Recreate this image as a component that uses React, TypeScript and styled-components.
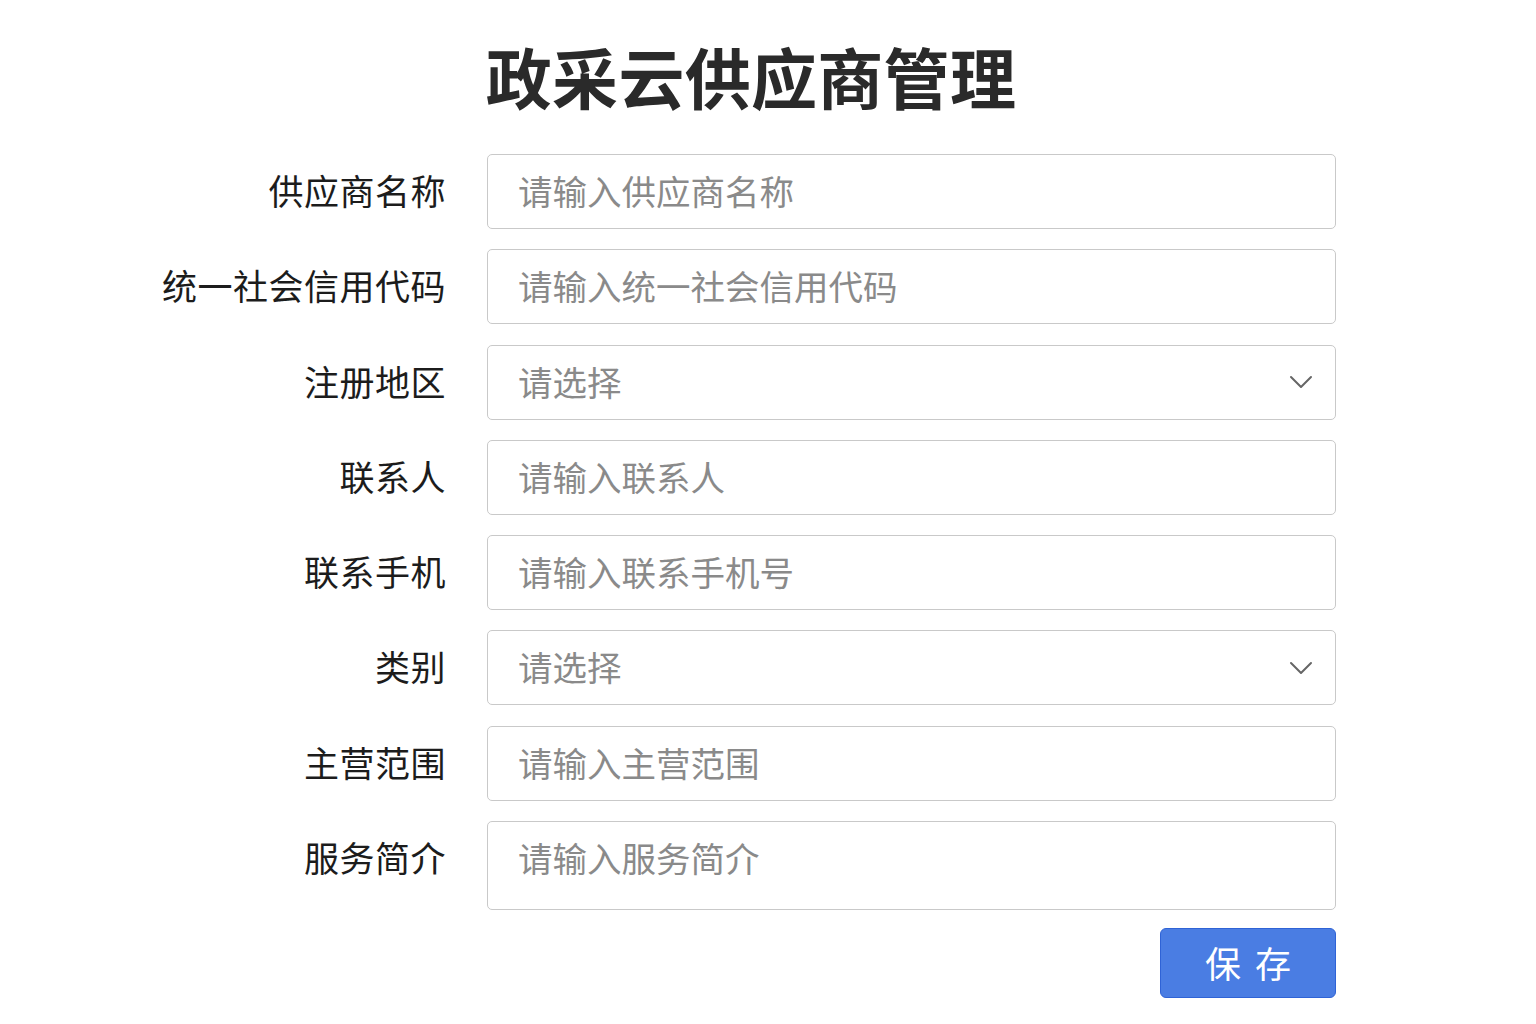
import React from "react";
import styled, { createGlobalStyle } from "styled-components";

const Global = createGlobalStyle`
  html, body { margin: 0; padding: 0; background: #ffffff; }
  body { font-family: "Noto Sans CJK SC", "Noto Sans", sans-serif; }
  * { box-sizing: border-box; }
`;

const Page = styled.div`
  width: 1536px;
  min-height: 1024px;
  background: #ffffff;
  padding-top: 42px;
`;

const Title = styled.h1`
  margin: 0 34px 0 0;
  text-align: center;
  font-size: 66px;
  line-height: 66px;
  font-weight: 700;
  color: #2a2a2a;
  letter-spacing: 0.3px;
`;

const Form = styled.form`
  margin-top: 46px;
  margin-left: 144px;
  display: grid;
  grid-template-columns: 300px 849px;
  column-gap: 43px;
  row-gap: 20.3px;
`;

const Label = styled.label<{ $top?: boolean }>`
  display: flex;
  justify-content: flex-end;
  align-items: ${(p) => (p.$top ? "flex-start" : "center")};
  height: ${(p) => (p.$top ? "75px" : "auto")};
  align-self: ${(p) => (p.$top ? "start" : "stretch")};
  font-size: 35px;
  letter-spacing: 0.5px;
  color: #1c1c1c;
  line-height: 72px;
  padding-bottom: 3px;
  margin-right: -2px;
`;

const fieldBase = `
  width: 849px;
  border: 1.5px solid #c9c9c9;
  border-radius: 5px;
  background: #ffffff;
  font-family: "Noto Sans CJK SC", "Noto Sans", sans-serif;
  font-size: 34.5px;
  color: #333;
  padding: 0 30px 3px 30px;
  outline: none;
`;

const TextInput = styled.input`
  ${fieldBase}
  height: 75px;
  &::placeholder { color: #8a8a8a; }
`;

const SelectBox = styled.div`
  ${fieldBase}
  height: 75px;
  display: flex;
  align-items: center;
  justify-content: space-between;
  color: #8a8a8a;
  padding-right: 22px;
`;

const ChevronWrap = styled.span`
  display: flex;
  margin-top: 3px;
`;

const TextArea = styled.textarea`
  ${fieldBase}
  height: 89px;
  padding-top: 8px;
  line-height: 54px;
  resize: none;
  display: block;
  &::placeholder { color: #8a8a8a; }
`;

const Actions = styled.div`
  grid-column: 2;
  display: flex;
  justify-content: flex-end;
  margin-top: -2px;
`;

const SaveButton = styled.button`
  width: 176px;
  height: 70px;
  border: 1.5px solid #2f63d6;
  border-radius: 6px;
  background: #4a7de3;
  color: #ffffff;
  font-family: "Noto Sans CJK SC", "Noto Sans", sans-serif;
  font-size: 36px;
  letter-spacing: 3px;
  text-indent: 3px;
  cursor: pointer;
  padding: 0 0 2px 0;
  white-space: pre;
`;

const Chevron = () => (
  <svg width="24" height="14" viewBox="0 0 24 14" fill="none">
    <path d="M2 2 L12 12 L22 2" stroke="#666" strokeWidth="2" strokeLinecap="round" strokeLinejoin="round" />
  </svg>
);

type Field = { label: string; kind: "input" | "select" | "textarea"; placeholder: string };

const fields: Field[] = [
  { label: "供应商名称", kind: "input", placeholder: "请输入供应商名称" },
  { label: "统一社会信用代码", kind: "input", placeholder: "请输入统一社会信用代码" },
  { label: "注册地区", kind: "select", placeholder: "请选择" },
  { label: "联系人", kind: "input", placeholder: "请输入联系人" },
  { label: "联系手机", kind: "input", placeholder: "请输入联系手机号" },
  { label: "类别", kind: "select", placeholder: "请选择" },
  { label: "主营范围", kind: "input", placeholder: "请输入主营范围" },
  { label: "服务简介", kind: "textarea", placeholder: "请输入服务简介" },
];

export default function App() {
  return (
    <Page>
      <Global />
      <Title>政采云供应商管理</Title>
      <Form onSubmit={(e) => e.preventDefault()}>
        {fields.map((f) => (
          <React.Fragment key={f.label}>
            <Label $top={f.kind === "textarea"}>{f.label}</Label>
            {f.kind === "input" && <TextInput placeholder={f.placeholder} />}
            {f.kind === "select" && (
              <SelectBox>
                <span>{f.placeholder}</span>
                <ChevronWrap>
                  <Chevron />
                </ChevronWrap>
              </SelectBox>
            )}
            {f.kind === "textarea" && <TextArea placeholder={f.placeholder} />}
          </React.Fragment>
        ))}
        <Actions>
          <SaveButton type="submit">{"保 存"}</SaveButton>
        </Actions>
      </Form>
    </Page>
  );
}
